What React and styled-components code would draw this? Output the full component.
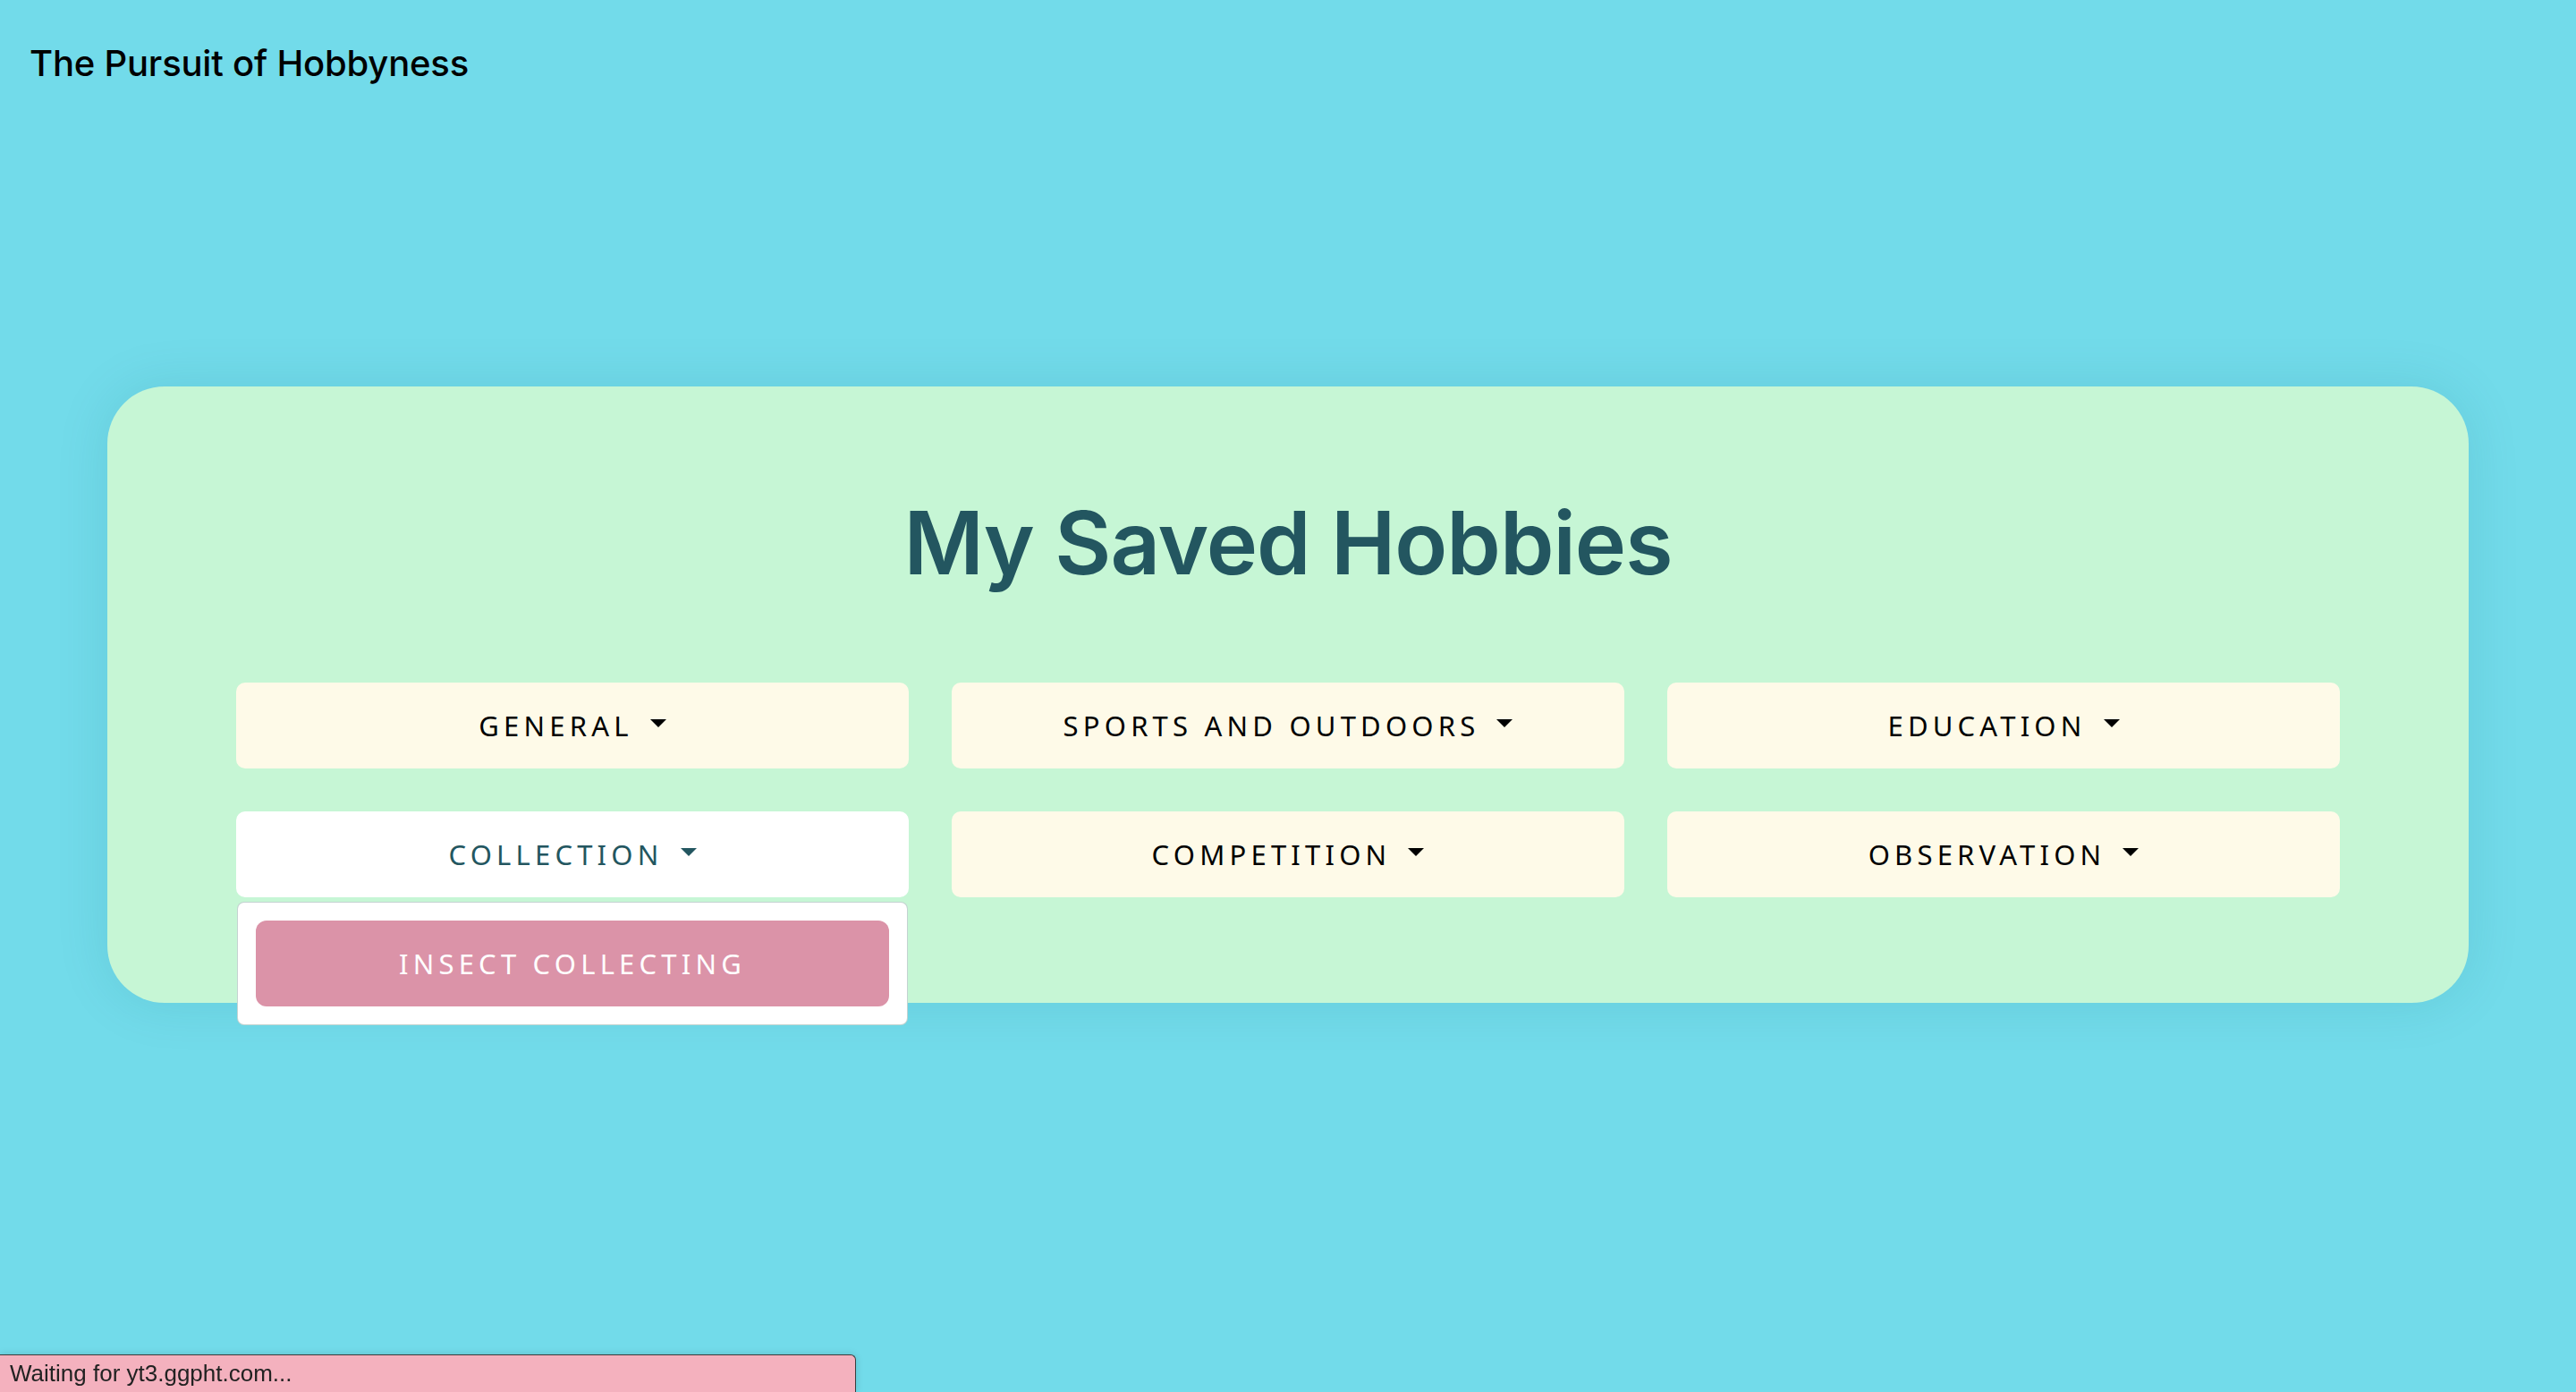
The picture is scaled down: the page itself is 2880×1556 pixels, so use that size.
import React from "react";
import styled, { createGlobalStyle } from "styled-components";

const GlobalStyle = createGlobalStyle`
  html, body {
    margin: 0;
    padding: 0;
    background: #72dbea;
    min-height: 100vh;
  }
  * { box-sizing: border-box; }
`;

const Page = styled.div`
  min-height: 100vh;
  background: #72dbea;
  font-family: Inter, "Noto Sans", sans-serif;
`;

const Header = styled.header`
  padding: 47px 33px 0;
  height: 96px;
`;

const Brand = styled.h1`
  margin: 0;
  font-family: Inter, "Noto Sans", sans-serif;
  font-weight: 500;
  font-size: 40px;
  line-height: 1.2;
  color: #000;
  letter-spacing: -0.2px;
`;

const Main = styled.main`
  padding: 336px 120px 0;
`;

const Card = styled.section`
  background: #c6f6d5;
  border-radius: 64px;
  padding: 126px 144px 118px;
  box-shadow: 0 0 60px rgba(20, 90, 110, 0.12);
`;

const Title = styled.h2`
  margin: 0 0 108px;
  text-align: center;
  font-family: Inter, "Noto Sans", sans-serif;
  font-weight: 600;
  font-size: 97px;
  line-height: 1;
  color: #235660;
  letter-spacing: -1px;
`;

const Grid = styled.div`
  display: grid;
  grid-template-columns: repeat(3, 1fr);
  column-gap: 48px;
  row-gap: 48px;
`;

const DropWrap = styled.div`
  position: relative;
`;

const Toggle = styled.button`
  width: 100%;
  height: 96px;
  border: none;
  border-radius: 10px;
  background: ${(p) => (p.$open ? "#ffffff" : "#fefae8")};
  color: ${(p) => (p.$open ? "#235660" : "#000000")};
  font-family: "Noto Sans", "Open Sans", sans-serif;
  font-size: 31px;
  font-weight: 400;
  letter-spacing: 5.2px;
  text-transform: uppercase;
  display: flex;
  align-items: center;
  justify-content: center;
  cursor: pointer;
`;

const Caret = styled.span`
  display: inline-block;
  margin-left: 19px;
  width: 0;
  height: 0;
  border-left: 9.5px solid transparent;
  border-right: 9.5px solid transparent;
  border-top: 9.5px solid currentColor;
  transform: translateY(-3px);
`;

const Menu = styled.div`
  position: absolute;
  top: calc(100% + 5px);
  left: 1px;
  right: 1px;
  background: #ffffff;
  border: 1px solid rgba(20, 80, 70, 0.25);
  border-radius: 8px;
  padding: 20px;
  z-index: 5;
`;

const MenuItem = styled.a`
  display: flex;
  align-items: center;
  justify-content: center;
  height: 96px;
  border-radius: 12px;
  background: #db93a8;
  color: #ffffff;
  font-family: "Noto Sans", "Open Sans", sans-serif;
  font-size: 31px;
  letter-spacing: 5.2px;
  text-transform: uppercase;
  text-decoration: none;
`;

const StatusBar = styled.div`
  position: fixed;
  left: 0;
  bottom: 0;
  width: 957px;
  height: 42px;
  background: #f4b1be;
  border-top: 1px solid #3c3c3c;
  border-right: 1px solid #3c3c3c;
  border-top-right-radius: 6px;
  display: flex;
  align-items: center;
  padding-left: 11px;
  font-family: "Liberation Sans", Arial, sans-serif;
  font-size: 26px;
  color: #222;
  box-shadow: 0 0 8px rgba(0, 0, 0, 0.15);
`;

const categories = [
  { name: "General" },
  { name: "Sports and Outdoors" },
  { name: "Education" },
  { name: "Collection", open: true, items: ["Insect Collecting"] },
  { name: "Competition" },
  { name: "Observation" },
];

export default function App() {
  return (
    <Page>
      <GlobalStyle />
      <Header>
        <Brand>The Pursuit of Hobbyness</Brand>
      </Header>
      <Main>
        <Card>
          <Title>My Saved Hobbies</Title>
          <Grid>
            {categories.map((c) => (
              <DropWrap key={c.name}>
                <Toggle $open={c.open}>
                  {c.name}
                  <Caret />
                </Toggle>
                {c.open && (
                  <Menu>
                    {c.items.map((it) => (
                      <MenuItem key={it} href="#">
                        {it}
                      </MenuItem>
                    ))}
                  </Menu>
                )}
              </DropWrap>
            ))}
          </Grid>
        </Card>
      </Main>
      <StatusBar>Waiting for yt3.ggpht.com...</StatusBar>
    </Page>
  );
}
